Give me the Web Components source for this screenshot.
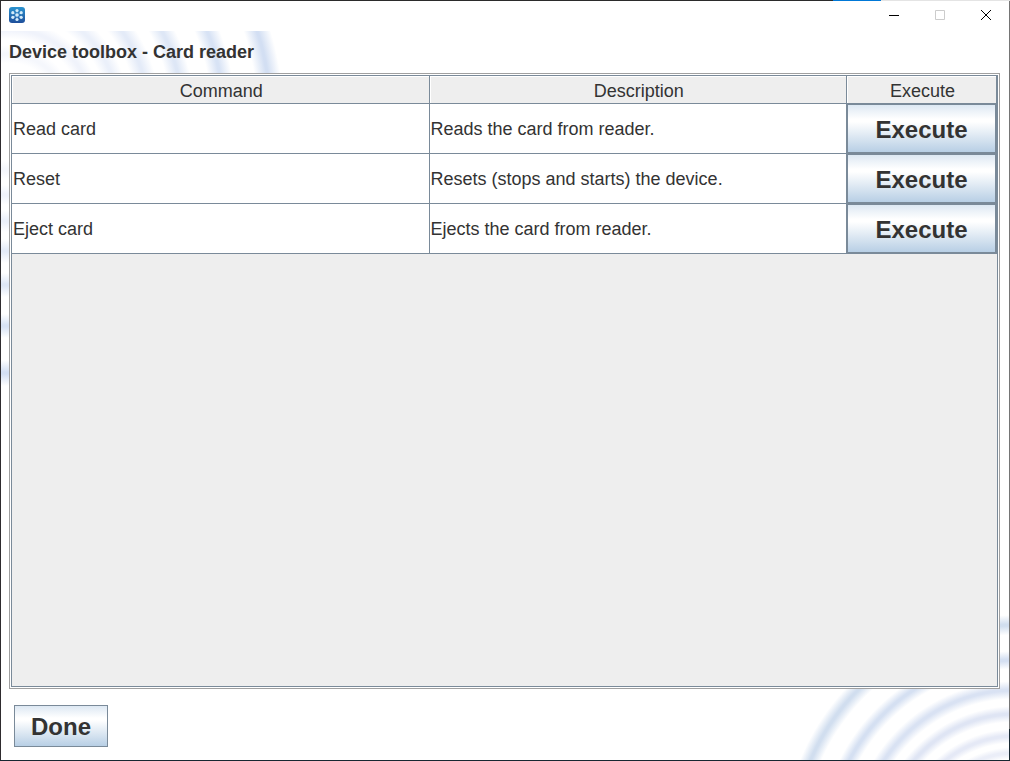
<!DOCTYPE html>
<html lang="en">
<head>
<meta charset="utf-8">
<title>Device toolbox</title>
<style>
  html, body {
    height: 100%;
    margin: 0;
  }
  body {
    font-family: Arial, "Liberation Sans", sans-serif;
    color: #333;
  }
</style>
</head>
<body>
<app-window>
  <title-bar slot="title"></title-bar>
  <toolbox-pane heading="Device toolbox - Card reader">
    <command-table></command-table>
    <metal-button slot="footer">Done</metal-button>
  </toolbox-pane>
</app-window>

<script>
const commands = [
  { name: 'Read card', description: 'Reads the card from reader.' },
  { name: 'Reset', description: 'Resets (stops and starts) the device.' },
  { name: 'Eject card', description: 'Ejects the card from reader.' },
];

const windowTemplate = document.createElement('template');
windowTemplate.innerHTML = `
  <style>
    :host {
      display: flex;
      flex-direction: column;
      box-sizing: border-box;
      height: 100%;
      padding: 1px;
      background:
        linear-gradient(#172832, #172832) bottom / 100% 1px no-repeat,
        linear-gradient(to left, #e4e4e4 129px, #0078d7 129px, #0078d7 177px, #2b2b2b 177px) top / 100% 1px no-repeat,
        linear-gradient(to top, #172832 32px, #757575 32px) right / 1px 100% no-repeat,
        #2e2b2e;
    }
    ::slotted(toolbox-pane) {
      flex: 1;
      min-height: 0;
    }
  </style>
  <slot name="title"></slot>
  <slot></slot>
`;

class AppWindow extends HTMLElement {
  constructor() {
    super();
    this.attachShadow({ mode: 'open' });
    this.shadowRoot.appendChild(windowTemplate.content.cloneNode(true));
  }
}

const titleTemplate = document.createElement('template');
titleTemplate.innerHTML = `
  <style>
    :host {
      display: flex;
      align-items: flex-start;
      justify-content: space-between;
      height: 30px;
      background: #fff;
    }
    svg {
      display: block;
    }
    .logo {
      margin: 6px 8px;
    }
    .buttons {
      display: flex;
    }
    button {
      display: flex;
      align-items: center;
      justify-content: center;
      width: 46px;
      height: 28px;
      padding: 0;
      border: 0;
      background: none;
      color: #000;
    }
    button:disabled {
      color: #ccc;
    }
  </style>
  <svg class="logo" width="16" height="16" viewBox="0 0 16 16">
    <defs>
      <linearGradient id="blue" x1="0" y1="0" x2="0" y2="1">
        <stop offset="0" stop-color="#2a93cf"/>
        <stop offset="1" stop-color="#1f4f9b"/>
      </linearGradient>
    </defs>
    <rect width="16" height="16" rx="3" fill="url(#blue)"/>
    <path d="M8 3v10M3.500 5.500l9 5M12.500 5.500l-9 5" stroke="#5f9fd2"/>
    <g fill="#d3ecfa">
      <circle cx="8" cy="8" r="1.700"/>
      <circle cx="8" cy="3.500" r="1.600"/>
      <circle cx="8" cy="12.500" r="1.600"/>
      <circle cx="3.800" cy="5.700" r="1.600"/>
      <circle cx="12.200" cy="5.700" r="1.600"/>
      <circle cx="3.800" cy="10.300" r="1.600"/>
      <circle cx="12.200" cy="10.300" r="1.600"/>
    </g>
  </svg>
  <div class="buttons">
    <button aria-label="Minimize">
      <svg width="10" height="10"><path d="M0 5.500h10" stroke="currentColor"/></svg>
    </button>
    <button aria-label="Maximize" disabled>
      <svg width="10" height="10"><path d="M.5.5h9v9h-9z" fill="none" stroke="currentColor"/></svg>
    </button>
    <button aria-label="Close">
      <svg width="10" height="10"><path d="M0 0l10 10M10 0L0 10" stroke="currentColor"/></svg>
    </button>
  </div>
`;

class TitleBar extends HTMLElement {
  constructor() {
    super();
    this.attachShadow({ mode: 'open' });
    this.shadowRoot.appendChild(titleTemplate.content.cloneNode(true));
  }
}

// Soft concentric rings, listed as [radius, half width, colour]
const topRings = [
  [58, 9, '#f5f7fc'], [83, 10, '#f0f3fb'], [109, 11, '#ebf0fa'],
  [139, 12, '#e4ebf8'], [173, 12, '#dee7f6'], [214, 12, '#d8e3f5'], [261, 13, '#d3dff3'],
];
const bottomRings = [
  [94, 6, '#ebeef8'], [111, 7, '#e5e9f6'], [133, 8, '#dfe5f4'],
  [157, 9, '#d9e2f3'], [187, 9, '#d5e0f2'], [222, 10, '#d1deef'],
];

function rings(list, position) {
  const stops = list.map(([r, w, color]) =>
    `#fff0 ${r - w}px, ${color} ${r - 1}px, ${color} ${r + 1}px, #fff0 ${r + w}px`);
  return `radial-gradient(circle at ${position}, ${stops.join(', ')})`;
}

class ToolboxPane extends HTMLElement {
  constructor() {
    super();
    this.attachShadow({ mode: 'open' });
  }

  connectedCallback() {
    this.shadowRoot.innerHTML = `
      <style>
        :host {
          display: flex;
          flex-direction: column;
          box-sizing: border-box;
          padding: 0 9px 13px 8px;
          background:
            ${rings(topRings, '8px 81px')},
            ${rings(bottomRings, 'calc(100% + 6px) calc(100% + 87px)')},
            #fff;
        }
        h1 {
          margin: 0;
          height: 42px;
          line-height: 42px;
          font-size: 18px;
        }
        ::slotted(command-table) {
          flex: 1;
          min-height: 0;
        }
        footer {
          padding: 16px 5px 0;
        }
      </style>
      <h1>${this.getAttribute('heading')}</h1>
      <slot></slot>
      <footer><slot name="footer"></slot></footer>
    `;
  }
}

const buttonTemplate = document.createElement('template');
buttonTemplate.innerHTML = `
  <style>
    :host {
      display: inline-block;
      vertical-align: top;
      height: 42px;
    }
    button {
      display: block;
      width: 100%;
      height: 100%;
      padding: 2px 16px 0;
      border: 1px solid #7a8a99;
      border-radius: 0;
      background: linear-gradient(#dde8f3, #fff 30%, #fff 36%, #b8cfe5);
      color: #333;
      font: bold 24px Arial, "Liberation Sans", sans-serif;
    }
  </style>
  <button><slot></slot></button>
`;

class MetalButton extends HTMLElement {
  constructor() {
    super();
    this.attachShadow({ mode: 'open' });
    this.shadowRoot.appendChild(buttonTemplate.content.cloneNode(true));
  }
}

class CommandTable extends HTMLElement {
  constructor() {
    super();
    this.attachShadow({ mode: 'open' });
  }

  connectedCallback() {
    this.shadowRoot.innerHTML = `
      <style>
        :host {
          display: block;
          box-sizing: border-box;
          padding: 1px;
          border: 1px solid #a0a0a0;
          background: #fff;
        }
        .view {
          box-sizing: border-box;
          height: 100%;
          border: 1px solid #7a8a99;
          background: #eee;
        }
        table {
          width: 100%;
          border-spacing: 0;
          table-layout: fixed;
          font-size: 18px;
        }
        th, td {
          box-sizing: border-box;
          border: solid #7a8a99;
          border-width: 0 1px 1px 0;
        }
        th {
          height: 28px;
          padding: 3px 0 0 2px;
          background: #eee;
          box-shadow: inset 1px 1px #fff;
          font-weight: normal;
        }
        td {
          height: 50px;
          padding: 2px 1px 0;
          background: #fff;
        }
        .action {
          width: 150px;
        }
        td.action {
          padding: 0;
        }
        metal-button {
          display: block;
          height: 49px;
        }
      </style>
      <div class="view">
        <table>
          <thead>
            <tr><th>Command</th><th>Description</th><th class="action">Execute</th></tr>
          </thead>
          <tbody>${commands.map(this.renderRow).join('')}</tbody>
        </table>
      </div>
    `;
  }

  renderRow(command) {
    return `
      <tr>
        <td>${command.name}</td>
        <td>${command.description}</td>
        <td class="action"><metal-button>Execute</metal-button></td>
      </tr>
    `;
  }
}

window.customElements.define('app-window', AppWindow);
window.customElements.define('title-bar', TitleBar);
window.customElements.define('toolbox-pane', ToolboxPane);
window.customElements.define('metal-button', MetalButton);
window.customElements.define('command-table', CommandTable);
</script>
</body>
</html>
